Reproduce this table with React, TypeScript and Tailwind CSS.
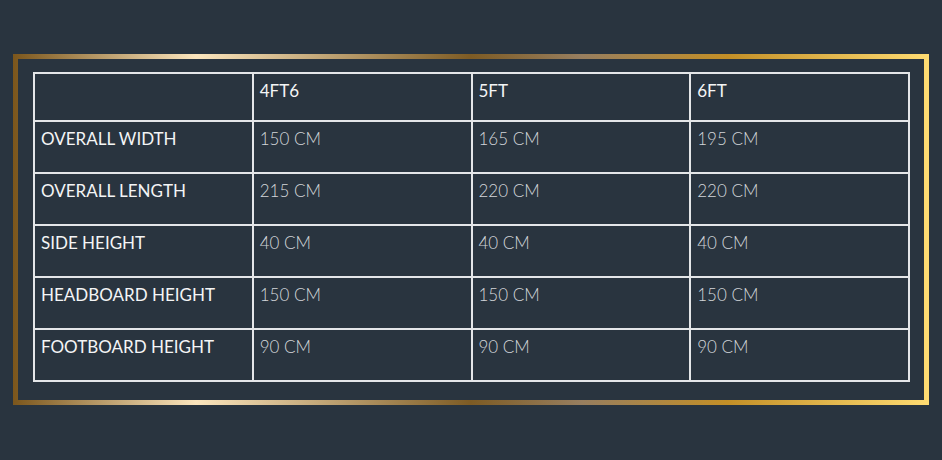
import React from "react";

const rows = [
  ["OVERALL WIDTH", "150 CM", "165 CM", "195 CM"],
  ["OVERALL LENGTH", "215 CM", "220 CM", "220 CM"],
  ["SIDE HEIGHT", "40 CM", "40 CM", "40 CM"],
  ["HEADBOARD HEIGHT", "150 CM", "150 CM", "150 CM"],
  ["FOOTBOARD HEIGHT", "90 CM", "90 CM", "90 CM"],
];

const SizeTable = () => {
  return (
    <div className="w-[942px] h-[460px] bg-[#29343f] pt-[54px] pl-[13px] font-['Lato','Liberation_Sans',sans-serif]">
      <div className="w-[916px] h-[351px] p-[5px] bg-[linear-gradient(90deg,#7b561c_0%,#fbe5bd_20%,#7d5b24_50%,#977e5f_62%,#c38f27_78%,#ffdc72_100%)]">
        <div className="w-full h-full bg-[#29343f] pt-[13px] pl-[15px]">
          <table className="w-[877px] border-collapse table-fixed text-[17px] leading-6">
            <thead>
              <tr className="h-[48px]">
                <th className="border-2 border-[#e4e6e8] pl-[6px] pr-2 pt-[5px] align-top text-left font-normal text-[#f4f5f6]" />
                {["4FT6", "5FT", "6FT"].map((h) => (
                  <th
                    key={h}
                    className="border-2 border-[#e4e6e8] pl-[6px] pr-2 pt-[5px] align-top text-left font-normal text-[#f4f5f6]"
                  >
                    {h}
                  </th>
                ))}
              </tr>
            </thead>
            <tbody>
              {rows.map((r) => (
                <tr key={r[0]} className="h-[52px]">
                  <td className="border-2 border-[#e4e6e8] pl-[6px] pr-2 pt-[5px] align-top font-normal text-[#f4f5f6]">{r[0]}</td>
                  {r.slice(1).map((v, i) => (
                    <td
                      key={i}
                      className="border-2 border-[#e4e6e8] pl-[6px] pr-2 pt-[5px] align-top font-light text-[#d3d6da]"
                    >
                      {v}
                    </td>
                  ))}
                </tr>
              ))}
            </tbody>
          </table>
        </div>
      </div>
    </div>
  );
};

export default SizeTable;
